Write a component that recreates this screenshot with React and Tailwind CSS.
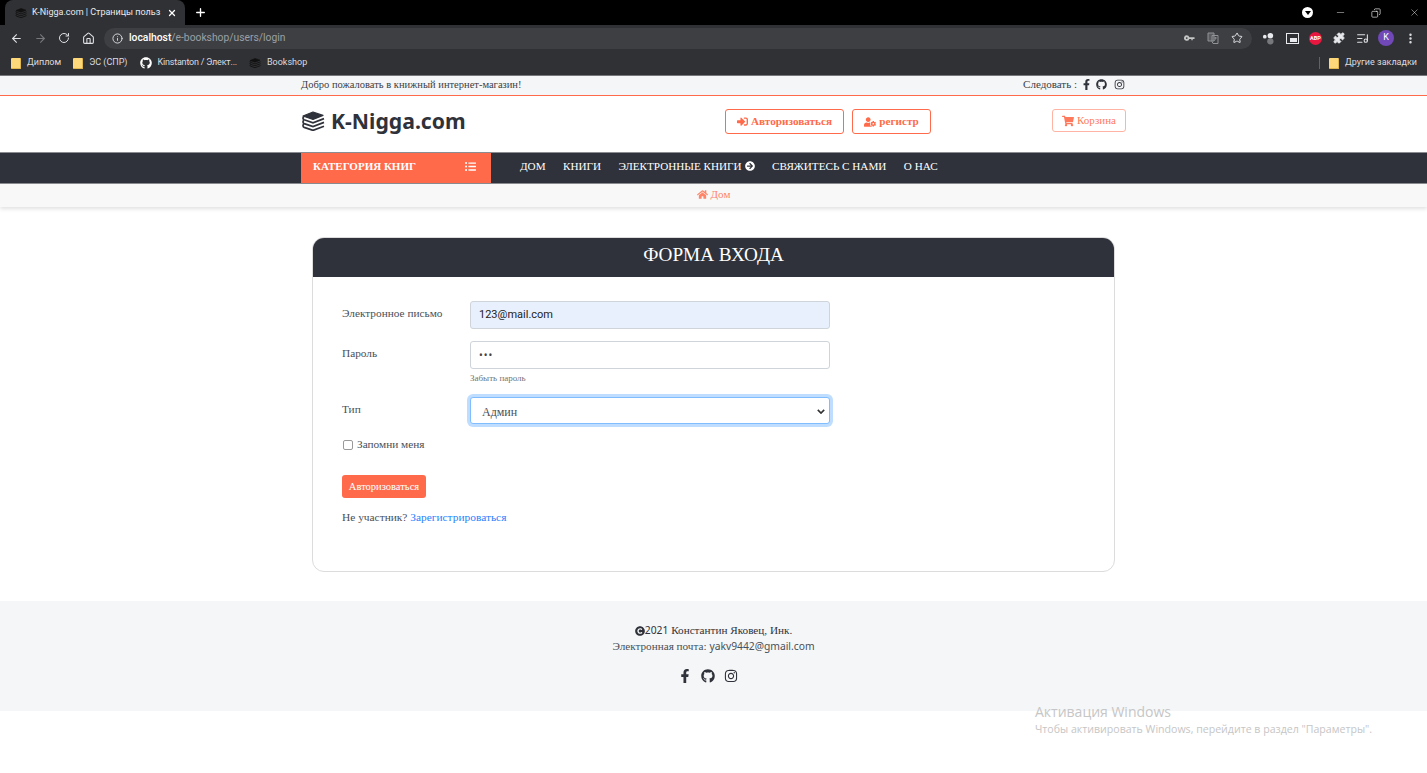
import React from "react";
import {
  ArrowLeft,
  ArrowRight,
  RotateCw,
  Home,
  Info,
  Star,
  Puzzle,
  ListMusic,
  MoreVertical,
  Minus,
  Copy,
  X,
  Plus,
} from "lucide-react";
import {
  FaSignInAlt,
  FaUserCog,
  FaShoppingCart,
  FaHome,
  FaListUl,
  FaArrowCircleRight,
  FaFacebookF,
  FaGithub,
  FaInstagram,
  FaCopyright,
} from "react-icons/fa";

const serif = "font-['Liberation_Serif',serif]";
const sans = "font-['Noto_Sans',sans-serif]";

const BooksIcon = ({ className }) => (
  <svg viewBox="0 0 24 20" className={`shrink-0 ${className}`} fill="none" stroke="currentColor">
    <path d="M2 5 12 1l10 3.4-10 4z" fill="currentColor" strokeWidth="1.2" strokeLinejoin="round" />
    <path d="M23 7.6l-11 4.2-8.8-3c-1.6-.7-1.6-2.6-.2-3.4" strokeWidth="1.7" />
    <path d="M23 11.4l-11 4.2-8.8-3c-1.6-.7-1.6-2.6-.2-3.4" strokeWidth="1.7" />
    <path d="M23 15.2l-11 4.2-8.8-3c-1.6-.7-1.6-2.6-.2-3.4" strokeWidth="1.7" />
  </svg>
);

const Bookmark = ({ icon, label, className = "" }) => (
  <div className={`flex items-center gap-[6px] text-[9px] text-[#dadce0] ${className}`}>
    {icon}
    <span>{label}</span>
  </div>
);

const FolderIcon = () => <div className="h-[11px] w-[10px] rounded-[1px] border-r border-b border-[#e0b64e] bg-[#fdd87a]" />;

const BrowserChrome = () => (
  <div className="font-['Roboto',sans-serif]">
    <div className="flex h-[25px] items-end bg-black pl-[5px]">
      <div className="flex h-[25px] w-[180px] items-center rounded-t-lg bg-[#303134] pl-[10px] pr-[8px]">
        <BooksIcon className="h-[10px] w-[12px] text-[#111]" />
        <span className="ml-[5px] whitespace-nowrap text-[9px] text-[#e8eaed]">
          K-Nigga.com | Страницы польз
        </span>
        <X size={10} strokeWidth={3} className="ml-auto shrink-0 text-white" />
      </div>
      <Plus size={13} strokeWidth={2.5} className="mb-[6px] ml-[9px] text-white" />
      <div className="mb-[7px] ml-auto flex items-center text-white">
        <div className="mr-[22px] flex h-[11px] w-[11px] items-center justify-center rounded-full bg-white">
          <div className="h-0 w-0 border-x-[3px] border-t-[4px] border-x-transparent border-t-black" />
        </div>
        <Minus size={11} strokeWidth={1} className="mr-[25px]" />
        <Copy size={10} strokeWidth={1.5} className="mr-[28px] -scale-x-100" />
        <X size={11} strokeWidth={1} className="mr-[7px]" />
      </div>
    </div>
    <div className="flex h-[26px] items-center bg-[#303134] pl-[10px] text-[#dfe1e5]">
      <ArrowLeft size={13} strokeWidth={2} />
      <ArrowRight size={13} strokeWidth={2} className="ml-[11px] text-[#77787b]" />
      <RotateCw size={12} strokeWidth={2} className="ml-[11px]" />
      <Home size={13} strokeWidth={2} className="ml-[12px]" />
      <div className="ml-[9px] flex h-[21px] w-[1148px] items-center rounded-full bg-[#3e3f42] px-[8px]">
        <Info size={11} strokeWidth={2} />
        <span className="ml-[6px] text-[10.3px] text-[#9aa0a6]">
          <span className="font-medium text-white">localhost</span>/e-bookshop/users/login
        </span>
        <svg viewBox="0 0 12 7" className="ml-auto h-[7px] w-[11px] text-[#c4c7c5]" fill="currentColor">
          <path d="M3 0a3 3 0 1 0 2.8 4H8v1.5h1.5V4H11l1-1-1-1H5.8A3 3 0 0 0 3 0zm0 2a1 1 0 1 1 0 2 1 1 0 0 1 0-2z" />
        </svg>
        <svg viewBox="0 0 12 12" className="ml-[12px] h-[12px] w-[12px] text-[#8f9296]" fill="none" stroke="currentColor">
          <path d="M1 1h6v8H1z" fill="currentColor" fillOpacity=".35" />
          <path d="M5 3.5h6v8H6l-1-2z" />
          <path d="M7 6h3M8.5 5v1c0 1.5-.8 2.5-1.5 3" strokeWidth=".8" />
        </svg>
        <Star size={12} className="ml-[12px] mr-[1px]" />
      </div>
      <svg viewBox="0 0 14 14" className="ml-[10px] h-[13px] w-[13px]">
        <circle cx="9" cy="4" r="3" fill="#e8eaed" />
        <circle cx="3" cy="5" r="2" fill="#e8eaed" />
        <circle cx="9" cy="10" r="3.4" fill="#77787b" />
      </svg>
      <div className="ml-[11px] flex h-[11px] w-[13px] items-end justify-end border border-[#e8eaed] p-[1px]">
        <div className="h-[4px] w-[7px] bg-[#e8eaed]" />
      </div>
      <div className="ml-[10px] flex h-[13px] w-[13px] items-center justify-center rounded-full bg-[#e8173f] text-[5.5px] font-bold text-white">
        ABP
      </div>
      <Puzzle size={12} fill="#e8eaed" className="ml-[11px]" />
      <ListMusic size={13} className="ml-[11px]" />
      <div className="ml-[9px] flex h-[16px] w-[16px] items-center justify-center rounded-full bg-[#7048b8] text-[9px] text-white">
        K
      </div>
      <MoreVertical size={13} strokeWidth={2.5} className="ml-[10px]" />
    </div>
    <div className="flex h-[25px] items-center gap-[12px] border-b border-[#77787b] bg-[#303134] pl-[11px] pr-[10px]">
      <Bookmark icon={<FolderIcon />} label="Диплом" />
      <Bookmark icon={<FolderIcon />} label="ЭС (СПР)" />
      <Bookmark className="tracking-[-0.2px]" icon={<FaGithub size={12} className="text-white" />} label="Kinstanton / Элект..." />
      <Bookmark icon={<BooksIcon className="h-[10px] w-[12px] text-[#111]" />} label="Bookshop" />
      <div className="ml-auto flex items-center">
        <div className="mr-[9px] h-[12px] w-px bg-[#5f6368]" />
        <Bookmark icon={<FolderIcon />} label="Другие закладки" />
      </div>
    </div>
  </div>
);

const OutlineButton = ({ icon, children, className }) => (
  <button className={`flex items-center justify-center gap-[3px] rounded-[3px] border border-[#ff6b4a] bg-white text-[#ff6b4a] ${className}`}>
    {icon}
    {children}
  </button>
);

const SocialIcons = ({ size, gap, fClass = "" }) => (
  <div className={`flex items-center text-[#2f323a] ${gap}`}>
    <FaFacebookF size={size} className={fClass} />
    <FaGithub size={size} />
    <FaInstagram size={size} />
  </div>
);

const Field = ({ label, className, children }) => (
  <div className={`flex ${className}`}>
    <label className="w-[128px] pt-[4px] text-[11.3px] text-[#495057]">{label}</label>
    {children}
  </div>
);

export default function App() {
  return (
    <div className={`relative min-h-[773px] overflow-hidden bg-white ${serif}`}>
      <BrowserChrome />

      <div className="h-[20px] border-b border-[#ff6b4a] bg-[#f5f6f8] shadow-[0_1px_2px_rgba(0,0,0,0.15)]">
        <div className="mx-auto flex h-full w-[825px] items-center justify-between pb-[2px] pr-[1px] text-[10.5px] text-[#3b3e46]">
          <span>Добро пожаловать в книжный интернет-магазин!</span>
          <div className="flex items-center">
            <span className="mr-[4px] text-[11px]">Следовать :</span>
            <SocialIcons size={11} gap="gap-[7px]" fClass="-mr-[3px]" />
          </div>
        </div>
      </div>

      <div className="h-[56px] bg-white">
        <div className="mx-auto flex h-full w-[825px] items-start">
          <div className="mt-[12px] flex w-[164px] shrink-0 items-center text-[#2f323a]">
            <BooksIcon className="h-[20px] w-[24px]" />
            <span className={`ml-[6px] whitespace-nowrap text-[21.2px] font-bold leading-[26px] ${sans}`}>K-Nigga.com</span>
          </div>
          <OutlineButton
            className="ml-[260px] mt-[13px] h-[25px] w-[119px] text-[11.2px] font-bold"
            icon={<FaSignInAlt size={11} />}
          >
            Авторизоваться
          </OutlineButton>
          <OutlineButton
            className="ml-[8px] mt-[13px] h-[25px] w-[79px] text-[11.2px] font-bold"
            icon={<FaUserCog size={12} />}
          >
            регистр
          </OutlineButton>
          <OutlineButton
            className="ml-[121px] mt-[13px] h-[23px] w-[74px] border-[#ffb3a3] text-[11px] text-[#ff7a5c]"
            icon={<FaShoppingCart size={12} />}
          >
            Корзина
          </OutlineButton>
        </div>
      </div>

      <div className="h-[32px] border-y border-[#8a8c91] bg-[#2f323a]">
        <div className="mx-auto flex h-full w-[825px] items-center">
          <div className="flex h-full w-[190px] items-center justify-between bg-[#ff6b4a] pb-[3px] pl-[12px] pr-[15px] text-[11px] font-bold text-white">
            <span>КАТЕГОРИЯ КНИГ</span>
            <FaListUl size={11} />
          </div>
          <div className="ml-[29px] flex items-center gap-[17.5px] pb-[3px] text-[11.15px] text-white">
            <span>ДОМ</span>
            <span>КНИГИ</span>
            <span className="flex items-center gap-[3px]">
              ЭЛЕКТРОННЫЕ КНИГИ <FaArrowCircleRight size={10} />
            </span>
            <span>СВЯЖИТЕСЬ С НАМИ</span>
            <span>О НАС</span>
          </div>
        </div>
      </div>

      <div className="flex h-[23px] items-center justify-center gap-[3px] bg-[#f8f8f8] pb-[2px] text-[11px] text-[#ff8468] shadow-[0_2px_4px_rgba(0,0,0,0.12)]">
        <FaHome size={11} />
        <span>Дом</span>
      </div>

      <div className="mx-auto mt-[30px] h-[335px] w-[803px] overflow-hidden rounded-xl border border-[#dcdcdc]">
        <div className="flex h-[39px] items-center justify-center bg-[#2f323a] pb-[4px] text-[19.2px] text-white">
          ФОРМА ВХОДА
        </div>
        <div className="px-[29px] pt-[24px]">
          <Field label="Электронное письмо">
            <div className="flex h-[28px] w-[360px] items-center rounded-[3px] border border-[#ced4da] bg-[#e8f0fe] px-[8px] font-['Roboto',sans-serif] text-[11px] text-[#222]">
              123@mail.com
            </div>
          </Field>
          <Field label="Пароль" className="mt-[12px]">
            <div className="w-[360px]">
              <div className={`flex h-[28px] items-center rounded-[3px] border border-[#ced4da] bg-white px-[8px] text-[10px] tracking-[1px] text-[#444] ${sans}`}>
                •••
              </div>
              <div className="mt-[4px] text-[9px] leading-[10px] text-[#6c757d]">Забыть пароль</div>
            </div>
          </Field>
          <Field label="Тип" className="mt-[14px]">
            <div className="flex h-[27px] w-[360px] items-center justify-between rounded-[3px] border border-[#80bdff] bg-white pl-[11px] pr-[4px] pt-[2px] text-[12px] text-[#495057] shadow-[0_0_0_3px_rgba(0,123,255,0.25)]">
              <span>Админ</span>
              <svg viewBox="0 0 10 6" className="h-[5px] w-[8px]" fill="none" stroke="#333" strokeWidth="2">
                <path d="M1 1l4 4 4-4" />
              </svg>
            </div>
          </Field>
          <div className="mt-[13px] flex h-[15px] items-center text-[11.3px] text-[#495057]">
            <div className="ml-[1px] h-[10px] w-[10px] rounded-[2px] border border-[#9a9a9a] bg-white" />
            <span className="ml-[4px]">Запомни меня</span>
          </div>
          <button className="mt-[23px] flex h-[23px] w-[84px] items-center justify-center rounded-[3px] bg-[#ff6b4a] text-[10.5px] text-white">
            Авторизоваться
          </button>
          <div className="mt-[11px] text-[11.4px] text-[#495057]">
            Не участник? <span className="text-[#2a7fff]">Зарегистрироваться</span>
          </div>
        </div>
      </div>

      <div className="mt-[29px] flex h-[110px] flex-col items-center bg-[#f5f6f8] pt-[22px] text-[11.2px] text-[#2f323a]">
        <div className="flex h-[15px] items-center">
          <FaCopyright size={10} />
          <span className={`${sans} text-[10.3px]`}>2021</span>&nbsp;Константин Яковец, Инк.
        </div>
        <div className="mt-[1px] flex h-[15px] items-center text-[#495057]">
          Электронная почта:&nbsp;<span className={`${sans} text-[10.3px]`}>yakv9442@gmail.com</span>
        </div>
        <div className="mr-[11px] mt-[15px]">
          <SocialIcons size={14} gap="gap-[9px]" />
        </div>
      </div>

      <div className="absolute left-[1035px] top-[702px] font-['Open_Sans',sans-serif] text-[#c6c6c6]">
        <div className="text-[14px] leading-[19px]">Активация Windows</div>
        <div className="text-[10.6px] leading-[16px]">Чтобы активировать Windows, перейдите в раздел "Параметры".</div>
      </div>
    </div>
  );
}
